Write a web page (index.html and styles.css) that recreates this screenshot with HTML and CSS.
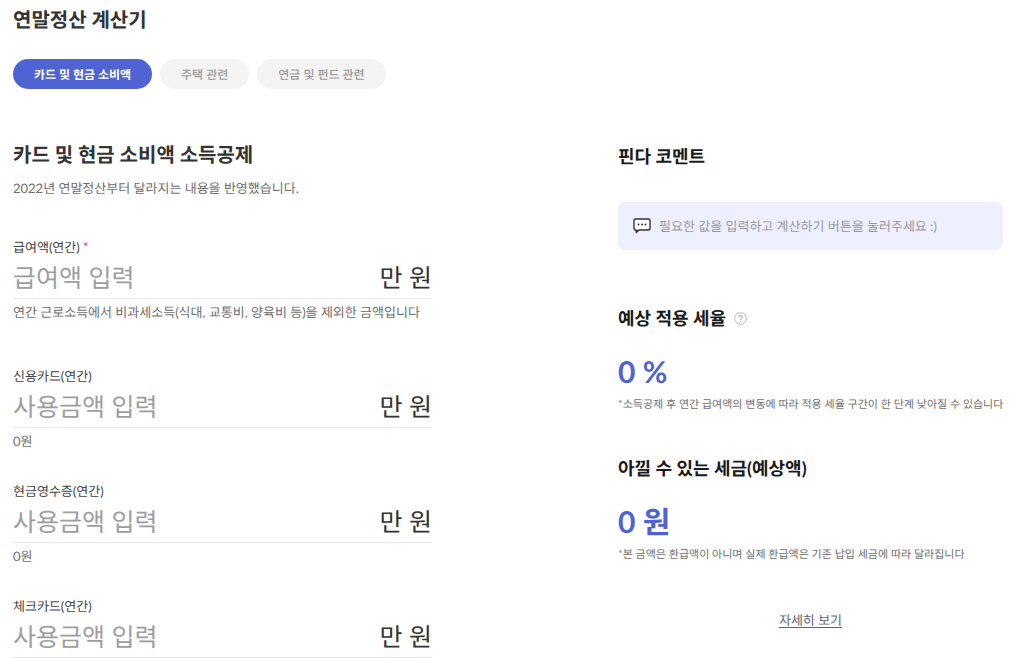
FILE: index.html
```html
<!DOCTYPE html>
<html lang="ko">
<head>
    <meta charset="UTF-8">
    <meta name="viewport" content="width=device-width, initial-scale=1.0">
    <title>연말정산 계산기</title>
    <link rel="stylesheet" href="styles.css">
</head>
<body>
<div class="container">
    <h1>연말정산 계산기</h1>
    <div class="tabs">
        <button type="button" class="tab active">카드 및 현금 소비액</button>
        <button type="button" class="tab">주택 관련</button>
        <button type="button" class="tab">연금 및 펀드 관련</button>
    </div>

    <div class="columns">
        <form class="calc-form">
            <h2>카드 및 현금 소비액 소득공제</h2>
            <p class="subtitle">2022년 연말정산부터 달라지는 내용을 반영했습니다.</p>

            <div class="form-group salary">
                <label for="salary">급여액(연간) <span class="required">*</span></label>
                <div class="input-row">
                    <input type="text" id="salary" name="salary" placeholder="급여액 입력" required>
                    <span class="unit">만 원</span>
                </div>
                <p class="hint">연간 근로소득에서 비과세소득(식대, 교통비, 양육비 등)을 제외한 금액입니다</p>
            </div>
            <div class="form-group">
                <label for="creditCard">신용카드(연간)</label>
                <div class="input-row">
                    <input type="text" id="creditCard" name="creditCard" placeholder="사용금액 입력">
                    <span class="unit">만 원</span>
                </div>
                <p class="hint">0원</p>
            </div>
            <div class="form-group">
                <label for="cashReceipt">현금영수증(연간)</label>
                <div class="input-row">
                    <input type="text" id="cashReceipt" name="cashReceipt" placeholder="사용금액 입력">
                    <span class="unit">만 원</span>
                </div>
                <p class="hint">0원</p>
            </div>
            <div class="form-group">
                <label for="checkCard">체크카드(연간)</label>
                <div class="input-row">
                    <input type="text" id="checkCard" name="checkCard" placeholder="사용금액 입력">
                    <span class="unit">만 원</span>
                </div>
            </div>
        </form>

        <div class="result">
            <h3>핀다 코멘트</h3>
            <div class="comment">
                <svg class="comment-icon" width="18" height="16" viewBox="0 0 18 16" fill="none">
                    <path d="M2.500 1h13A1.500 1.500 0 0 1 17 2.500v8a1.500 1.500 0 0 1-1.500 1.500H6l-2.800 2.600V12h-.7A1.500 1.500 0 0 1 1 10.500v-8A1.500 1.500 0 0 1 2.500 1z" fill="#fff" stroke="#333" stroke-width="1.400" stroke-linejoin="round"/>
                    <path d="M3 12h2.800l-2.600 2.600z" fill="#333"/>
                    <circle cx="5.500" cy="6.500" r="1" fill="#333"/>
                    <circle cx="9" cy="6.500" r="1" fill="#333"/>
                    <circle cx="12.500" cy="6.500" r="1" fill="#333"/>
                </svg>
                <p>필요한 값을 입력하고 계산하기 버튼을 눌러주세요 :)</p>
            </div>

            <h3>예상 적용 세율
                <button type="button" class="help" aria-label="도움말">
                    <svg width="13" height="13" viewBox="0 0 13 13" fill="none" stroke="#b4b9c6">
                        <circle cx="6.500" cy="6.500" r="5.800"/>
                        <path d="M4.700 5.200a1.800 1.800 0 1 1 2.700 1.500c-.6.35-.9.6-.9 1.200" stroke-width="1.200"/>
                        <circle cx="6.500" cy="9.500" r=".75" fill="#b4b9c6" stroke="none"/>
                    </svg>
                </button>
            </h3>
            <p class="amount">0 %</p>
            <p class="note">*소득공제 후 연간 급여액의 변동에 따라 적용 세율 구간이 한 단계 낮아질 수 있습니다</p>

            <h3>아낄 수 있는 세금(예상액)</h3>
            <p class="amount">0 원</p>
            <p class="note">*본 금액은 환급액이 아니며 실제 환급액은 기존 납입 세금에 따라 달라집니다</p>

            <a href="#" class="more">자세히 보기</a>
        </div>
    </div>
</div>
</body>
</html>
```
FILE: styles.css
```css
* {
    box-sizing: border-box;
}
body {
    margin: 0;
    background-color: #fff;
    color: #333;
    font-family: Lato, "Noto Sans CJK KR", sans-serif;
    font-size: 13px;
    line-height: 20px;
    text-rendering: geometricPrecision;
}
h1, h2, h3, p {
    margin: 0;
}
button, input {
    font-family: inherit;
    text-rendering: inherit;
}
.container {
    padding: 6px 21px 0 13px;
}
h1, h2 {
    font-size: 20px;
    line-height: 28px;
}
h3 {
    display: flex;
    align-items: center;
    gap: 8px;
    color: #1a1a1a;
    font-size: 18px;
    line-height: 28px;
}
.tabs {
    display: flex;
    gap: 8px;
    margin-top: 25px;
}
.tab {
    height: 30px;
    padding: 0 21px;
    border: none;
    border-radius: 15px;
    background-color: #f4f4f4;
    color: #999;
    font-size: 12px;
    font-weight: 500;
    cursor: pointer;
}
.tab.active {
    background-color: #4f63d2;
    color: #fff;
    font-weight: bold;
}
.columns {
    display: grid;
    grid-template-columns: minmax(0, 419fr) minmax(0, 385fr);
    column-gap: 186px;
    margin-top: 52px;
}
.result {
    padding-top: 1px;
}
.subtitle {
    margin-top: 9px;
    color: #6e6e6e;
}
.form-group {
    margin-top: 30px;
}
.form-group label {
    display: block;
    color: #444;
}
.form-group.salary {
    margin-top: 39px;
    margin-bottom: 44px;
}
.required {
    color: #f0325a;
}
.input-row {
    display: flex;
    align-items: center;
    height: 42px;
    border-bottom: 1px solid #e8e8e8;
    font-size: 25px;
}
.input-row input {
    flex: 1;
    min-width: 0;
    padding: 0;
    border: none;
    outline: none;
    background: none;
    color: #333;
    font-size: 25px;
}
.input-row input::placeholder {
    color: #9e9e9e;
}
.hint {
    margin-top: 3px;
    color: #6e6e6e;
}
.comment {
    display: flex;
    align-items: center;
    gap: 8px;
    margin: 32px 0 54px;
    padding: 14px 15px;
    border-radius: 7px;
    background-color: #eeefff;
    color: #999;
}
.help {
    display: flex;
    padding: 0;
    border: none;
    background: none;
    cursor: pointer;
}
.amount {
    margin-top: 20px;
    color: #4f63d2;
    font-size: 30px;
    font-weight: bold;
    line-height: 40px;
}
.note {
    margin: 5px 0 41px;
    color: #6e6e6e;
    font-size: 11px;
    line-height: 16px;
    white-space: nowrap;
}
.more {
    display: block;
    width: fit-content;
    margin: 47px auto 0;
    color: #5c6470;
    text-underline-offset: 2px;
}
```
